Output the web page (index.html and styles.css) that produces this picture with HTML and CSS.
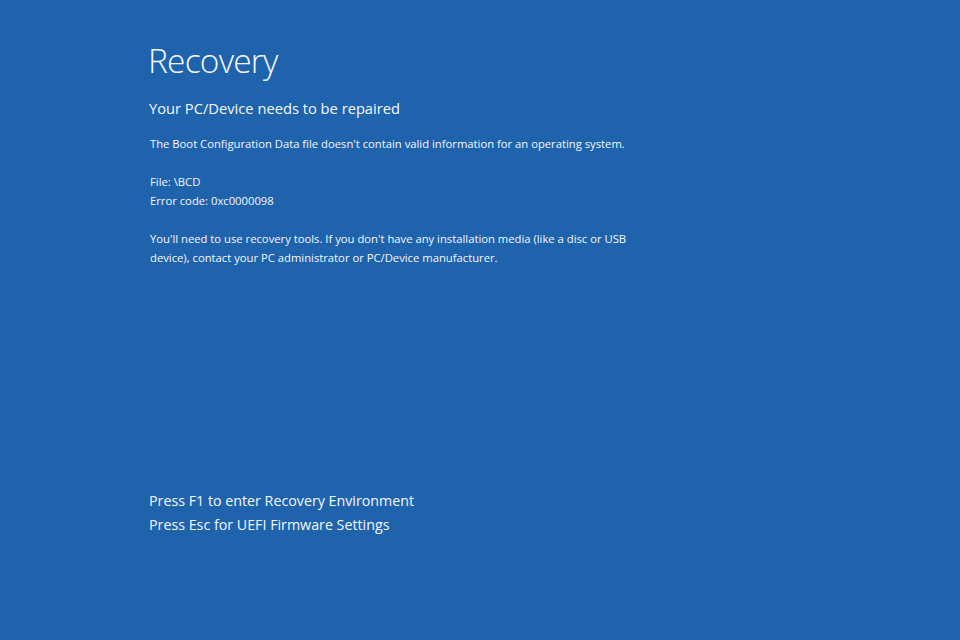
FILE: index.html
```html
<!DOCTYPE html>
<html lang="en">
  <head>
    <meta charset="UTF-8" />
    <meta name="viewport" content="width=device-width, initial-scale=1.0" />
    <title>Recovery</title>
    <link rel="stylesheet" href="styles.css">
  </head>
  <body>
    <main class="screen">
      <h1 class="title">Recovery</h1>
      <h2 class="subtitle">Your PC/Device needs to be repaired</h2>

      <div class="details">
        <p>The Boot Configuration Data file doesn't contain valid information for an operating system.</p>
        <p>File: \BCD<br>Error code: 0xc0000098</p>
        <p>You'll need to use recovery tools. If you don't have any installation media (like a disc or USB<br>device), contact your PC administrator or PC/Device manufacturer.</p>
      </div>

      <div class="keys">
        <div>Press F1 to enter Recovery Environment</div>
        <div>Press Esc for UEFI Firmware Settings</div>
      </div>
    </main>
  </body>
</html>
```

FILE: styles.css
```css
html,
body {
  margin: 0;
  height: 100%;
}

body {
  background-color: #1f63ad;
  color: #f4f7fb;
  font-family: "Open Sans", "Noto Sans", sans-serif;
}

/* Page */
.screen {
  display: flex;
  flex-direction: column;
  padding: 37px 0 0 148px;
}

.title {
  margin: 0;
  font-size: 33.5px;
  font-weight: 300;
  letter-spacing: -0.8px;
  line-height: 46px;
}

.subtitle {
  margin: 14px 0 0 1px;
  font-size: 14.7px;
  font-weight: 400;
  line-height: 22px;
}

/* Error text */
.details {
  margin: 15px 0 0 2px;
  font-size: 11.25px;
  line-height: 19px;
}

.details p {
  margin: 0 0 19px;
}

/* Bottom prompts */
.keys {
  margin-top: 203px;
  margin-left: 1px;
  font-size: 14.25px;
  line-height: 24px;
}
```
